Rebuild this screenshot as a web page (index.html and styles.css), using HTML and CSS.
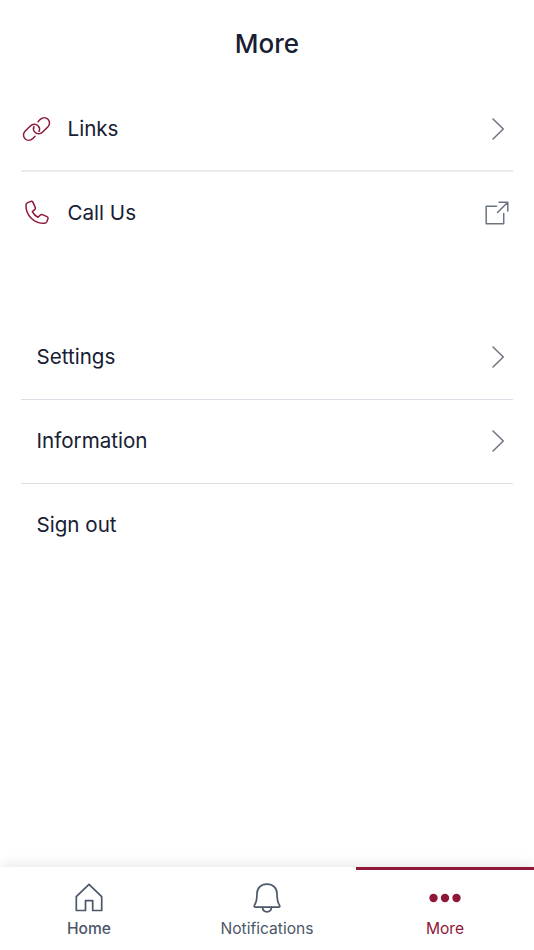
FILE: index.html
```
<!DOCTYPE html>
<html lang="en">
<head>
  <meta charset="UTF-8" />
  <meta name="viewport" content="width=device-width, initial-scale=1.0"/>
  <title>More</title>
  <link rel="stylesheet" href="styles.css">
</head>
<body>

  <h1>More</h1>

  <main>
    <ul class="menu">
      <li class="row">
        <svg class="row-icon" viewBox="0 0 90 78">
          <path d="M39 61l-7 7c-7 6-17 6-23 0s-6-16 0-22l16-16c7-7 17-7 23-1 5 5 6 11 3 17"/>
          <path d="M48 17l7-7c7-6 17-6 23 0s6 16 0 22L62 48c-7 7-17 7-23 1-5-5-6-11-3-17"/>
        </svg>
        <span class="label">Links</span>
        <svg class="chevron" viewBox="0 0 14 24"><path d="M2 2l10.3 10L2 22"/></svg>
      </li>
      <li class="row">
        <svg class="row-icon" viewBox="0 0 90 78">
          <path d="M17 8l10-4q4-1 6 3l7 16q1 4-2 6l-7 6c4 8 9 13 17 17l7-7q2-2 6-1l14 6q4 2 3 6l-4 10q-2 4-6 4C36 71 11 46 12 15q0-5 5-7z"/>
        </svg>
        <span class="label">Call Us</span>
        <svg class="external" viewBox="0 0 24 24"><path d="M11.5 5.3H1.2v17.5h17.5V12.5M12.5 11.5L22.8 1.2M14 1.2h8.8V10"/></svg>
      </li>
    </ul>

    <ul class="menu plain">
      <li class="row">
        <span class="label">Settings</span>
        <svg class="chevron" viewBox="0 0 14 24"><path d="M2 2l10.3 10L2 22"/></svg>
      </li>
      <li class="row">
        <span class="label">Information</span>
        <svg class="chevron" viewBox="0 0 14 24"><path d="M2 2l10.3 10L2 22"/></svg>
      </li>
      <li class="row">
        <span class="label">Sign out</span>
      </li>
    </ul>
  </main>

  <nav class="tabs">
    <a class="tab home">
      <svg viewBox="0 0 32 32"><path d="M3.3 14.7L16 2.3l12.7 12.4v13.8h-9v-9.8h-7.2v9.8H3.3z"/></svg>
      <span>Home</span>
    </a>
    <a class="tab">
      <svg viewBox="0 0 32 32">
        <path d="M16 2.2C9.8 2.2 6 6.3 6 11.8c0 5.5-.3 8-2.4 11.3-.8 1.3-.3 2 .8 2h23.2c1.1 0 1.6-.7.8-2C26.3 19.8 26 17.3 26 11.8 26 6.3 22.2 2.2 16 2.2z"/>
        <path d="M11.5 25.3c.4 6 8.6 6 9 0"/>
      </svg>
      <span>Notifications</span>
    </a>
    <a class="tab active">
      <svg class="dots" viewBox="0 0 32 32">
        <circle cx="4.5" cy="16" r="4.2"/>
        <circle cx="16" cy="16" r="4.2"/>
        <circle cx="27.5" cy="16" r="4.2"/>
      </svg>
      <span>More</span>
    </a>
  </nav>

</body>
</html>
```

FILE: styles.css
```
* {
  box-sizing: border-box;
}

body {
  display: flex;
  flex-direction: column;
  height: 100vh;
  margin: 0;
  font-family: Inter, sans-serif;
  background: #fff;
  color: #172033;
}

h1 {
  margin: 0;
  height: 88px;
  line-height: 88px;
  font-size: 26px;
  font-weight: 500;
  text-align: center;
}

main {
  flex: 1;
}

.menu {
  list-style: none;
  margin: 0 21px 60px;
  padding: 0;
}

.row {
  display: flex;
  align-items: center;
  height: 84px;
  padding: 0 1px;
  border-bottom: 2px solid #ebebef;
}

.plain .row {
  padding-left: 15.5px;
  padding-bottom: 1px;
  border-bottom: 1px solid #dedfe6;
}

.menu .row:last-child {
  border-bottom-color: transparent;
}

.label {
  flex: 1;
  font-size: 20.6px;
  line-height: 26px;
}

svg {
  fill: none;
  stroke-linecap: round;
  stroke-linejoin: round;
}

.row-icon {
  width: 30px;
  height: 26px;
  margin-right: 15.5px;
  stroke: #8d1838;
  stroke-width: 4.5;
}

.chevron {
  width: 14px;
  height: 24px;
  margin-right: 7px;
  stroke: #6b7280;
  stroke-width: 1.5;
}

.external {
  width: 24px;
  height: 24px;
  margin-right: 3px;
  stroke: #6b7280;
  stroke-width: 1.5;
}

.tabs {
  display: flex;
  height: 83px;
  background: #fff;
  box-shadow: 0 0 14px rgba(0, 0, 0, 0.13);
}

.tab {
  flex: 1;
  display: flex;
  flex-direction: column;
  align-items: center;
  padding-top: 12px;
  border-top: 3px solid transparent;
  font-size: 15.6px;
  line-height: 20px;
  color: #4b5768;
}

.tab svg {
  width: 32px;
  height: 32px;
  margin-bottom: 5px;
  stroke: #4b5768;
  stroke-width: 1.7;
}

.home {
  font-weight: 500;
}

.active {
  border-top-color: #8f1838;
  color: #8f1838;
}

.tab .dots {
  fill: #8f1838;
  stroke: none;
}
```
